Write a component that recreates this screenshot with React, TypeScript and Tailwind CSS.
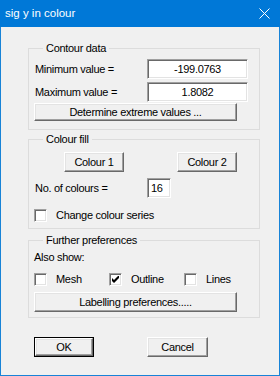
import clsx from "clsx";
import type { ReactNode } from "react";

const raised =
  "bg-[#f0f0f0] border border-t-white border-l-white border-r-[#696969] border-b-[#696969] shadow-[inset_-1px_-1px_0_#a0a0a0,inset_1px_1px_0_#e3e3e3]";
const sunken =
  "bg-white border border-t-[#a0a0a0] border-l-[#a0a0a0] border-r-white border-b-white shadow-[inset_1px_1px_0_#696969,inset_-1px_-1px_0_#e3e3e3]";

function Button({
  children,
  className,
  isDefault,
}: {
  children: ReactNode;
  className?: string;
  isDefault?: boolean;
}) {
  if (isDefault) {
    return (
      <div className={clsx("border border-black flex", className)}>
        <button className={clsx(raised, "flex-1 h-full text-[11px] leading-[13px] tracking-[-0.3px] text-black")}>
          {children}
        </button>
      </div>
    );
  }
  return (
    <button className={clsx(raised, "text-[11px] leading-[13px] tracking-[-0.3px] text-black", className)}>
      {children}
    </button>
  );
}

function Field({ value, className }: { value: string; className?: string }) {
  return (
    <div className={clsx(sunken, "flex items-center text-[11px] leading-[13px] text-black", className)}>
      {value}
    </div>
  );
}

function Check({ label, checked, className }: { label: string; checked?: boolean; className?: string }) {
  return (
    <label className={clsx("flex items-center", className)}>
      <span className={clsx(sunken, "w-[13px] h-[13px] flex items-center justify-center shrink-0")}>
        {checked && (
          <svg width="7" height="7" viewBox="0 0 7 7">
            <path d="M0 2v3l2 2 5-5V-1L2 4z" fill="#000" />
          </svg>
        )}
      </span>
      <span className="ml-[9px]">{label}</span>
    </label>
  );
}

function Group({ title, children, className }: { title: string; children: ReactNode; className?: string }) {
  return (
    <fieldset className={clsx("border border-[#dcdcdc] mx-0 pl-[5px]", className)}>
      <legend className="ml-[9px] px-[3px] leading-[13px]">{title}</legend>
      {children}
    </fieldset>
  );
}

export default function App() {
  return (
    <div
      className="w-[280px] h-[376px] bg-[#f0f0f0] border border-t-0 border-[#1883d7] flex flex-col text-[11px] leading-[13px] tracking-[-0.3px] text-black"
      style={{ fontFamily: '"Liberation Sans", Arial, sans-serif' }}
    >
      {/* title bar */}
      <div className="h-[27px] bg-[#0078d7] -mx-px flex items-center justify-between pl-[5px] pr-[10px] shrink-0">
        <span className="text-white text-[11.5px] tracking-normal">sig y in colour</span>
        <svg width="11" height="11" viewBox="0 0 11 11" className="text-white">
          <path d="M0.5 0.5l10 10M10.5 0.5l-10 10" stroke="currentColor" strokeWidth="1" />
        </svg>
      </div>

      <div className="pl-[27px] pr-[19px] flex flex-col">
        <Group title="Contour data" className="mt-[15px] pb-[8px]">
          <div className="flex items-center mt-[4px]">
            <span className="w-[113px] pl-px">Minimum value =</span>
            <Field value="-199.0763" className="w-[101px] h-[20px] justify-center" />
          </div>
          <div className="flex items-center mt-[3px]">
            <span className="w-[113px] pl-px">Maximum value =</span>
            <Field value="1.8082" className="w-[101px] h-[20px] justify-center" />
          </div>
          <Button className="w-[203px] h-[18px] mt-[1px]">Determine extreme values ...</Button>
        </Group>

        <Group title="Colour fill" className="mt-[3px] pb-[6px]">
          <div className="flex mt-[6px]">
            <Button className="w-[60px] h-[20px] ml-[30px]">Colour 1</Button>
            <Button className="w-[60px] h-[20px] ml-[53px]">Colour 2</Button>
          </div>
          <div className="flex items-center mt-[6px]">
            <span className="w-[113px] pl-px">No. of colours =</span>
            <Field value="16" className="w-[24px] h-[20px] pl-[3px]" />
          </div>
          <Check label="Change colour series" className="mt-[11px]" />
        </Group>

        <Group title="Further preferences" className="mt-[5px] pb-[5px]">
          <div className="mt-[4px]">Also show:</div>
          <div className="flex mt-[9px]">
            <Check label="Mesh" className="w-[75px]" />
            <Check label="Outline" checked className="w-[75px]" />
            <Check label="Lines" />
          </div>
          <Button className="w-[203px] h-[20px] mt-[6px]">Labelling preferences.....</Button>
        </Group>

        <div className="flex mt-[19px] pl-[6px]">
          <Button isDefault className="w-[60px] h-[20px]">
            OK
          </Button>
          <Button className="w-[61px] h-[20px] ml-[53px]">Cancel</Button>
        </div>
      </div>
    </div>
  );
}
